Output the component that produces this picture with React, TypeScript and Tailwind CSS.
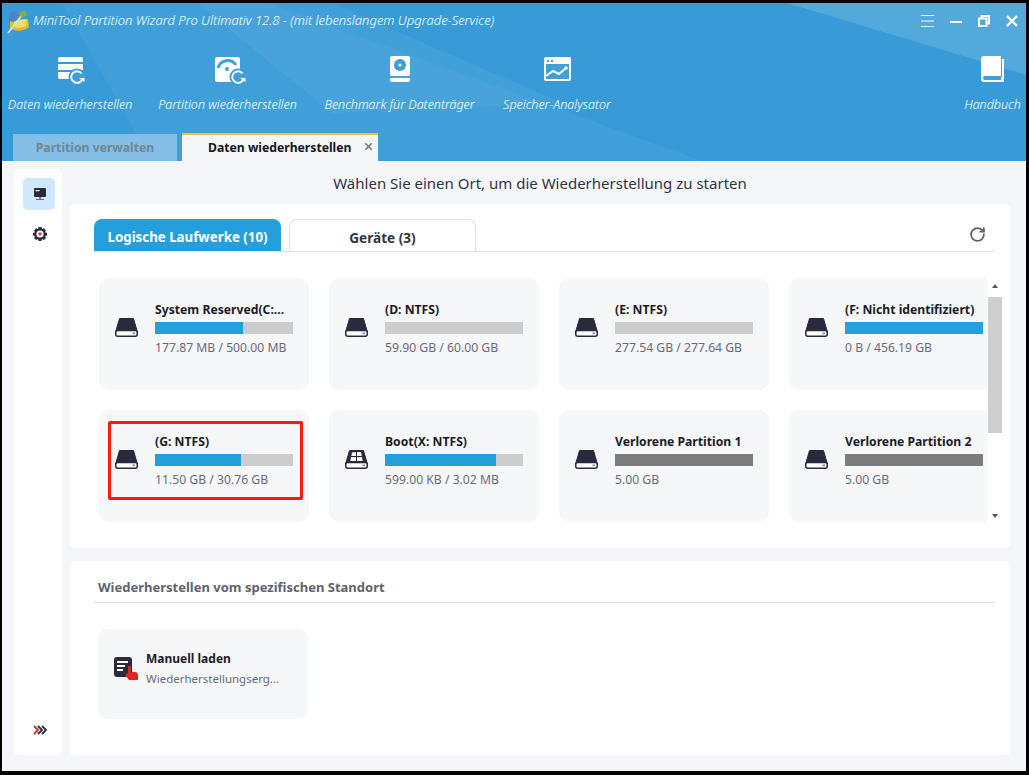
import { RotateCw, X } from 'lucide-react';

interface Drive {
  name: string;
  size: string;
  used: number;
  lost?: boolean;
  boot?: boolean;
  marked?: boolean;
}

const drives: Drive[] = [
  { name: 'System Reserved(C:...', size: '177.87 MB / 500.00 MB', used: 64 },
  { name: '(D: NTFS)', size: '59.90 GB / 60.00 GB', used: 0 },
  { name: '(E: NTFS)', size: '277.54 GB / 277.64 GB', used: 0 },
  { name: '(F: Nicht identifiziert)', size: '0 B / 456.19 GB', used: 100 },
  { name: '(G: NTFS)', size: '11.50 GB / 30.76 GB', used: 62.5, marked: true },
  { name: 'Boot(X: NTFS)', size: '599.00 KB / 3.02 MB', used: 80.5, boot: true },
  { name: 'Verlorene Partition 1', size: '5.00 GB', used: 100, lost: true },
  { name: 'Verlorene Partition 2', size: '5.00 GB', used: 100, lost: true },
];

const RefreshMark = ({ cx, cy }: { cx: number; cy: number }) => (
  <g>
    <circle cx={cx} cy={cy} r="8.5" fill="#3f9fd8" />
    <path
      d={`M${cx + 4.6} ${cy - 3.6}A5.8 5.8 0 1 0 ${cx + 5.8} ${cy + 1}`}
      fill="none"
      stroke="white"
      strokeWidth="1.8"
    />
    <path d={`M${cx + 2} ${cy + 1}H${cx + 7.5}V${cy + 5}Z`} fill="white" />
  </g>
);

const DataIcon = () => (
  <svg width="27" height="27" viewBox="0 0 27 27">
    <path d="M2 0H23a2 2 0 0 1 2 2V5H0V2a2 2 0 0 1 2-2Z" fill="white" />
    <rect x="0" y="7" width="25" height="6" fill="white" />
    <path d="M0 15H25V22H2a2 2 0 0 1-2-2Z" fill="white" />
    <RefreshMark cx={19} cy={20} />
  </svg>
);

const PartitionIcon = () => (
  <svg width="31" height="27" viewBox="0 0 31 27">
    <rect x="0" y="0" width="25" height="25" rx="2.5" fill="white" />
    <path d="M3 11A10 10 0 0 1 21 8" fill="none" stroke="#3f9fd8" strokeWidth="3" />
    <circle cx="12" cy="12" r="2" fill="#3f9fd8" />
    <RefreshMark cx={23} cy={20} />
  </svg>
);

const BenchmarkIcon = () => (
  <svg width="20" height="26" viewBox="0 0 20 26">
    <rect x="0" y="0" width="20" height="20" rx="2" fill="white" />
    <circle cx="10" cy="9" r="6" fill="#3f9fd8" />
    <circle cx="10" cy="9" r="1.6" fill="white" />
    <path d="M4 9H8V13L5 13Z" fill="#3f9fd8" />
    <path d="M0 22H20V24a2 2 0 0 1-2 2H2a2 2 0 0 1-2-2Z" fill="white" />
  </svg>
);

const AnalyzerIcon = () => (
  <svg width="27" height="24" viewBox="0 0 27 24">
    <path d="M2 0H25a2 2 0 0 1 2 2V22a2 2 0 0 1-2 2H2a2 2 0 0 1-2-2V2a2 2 0 0 1 2-2Z" fill="white" />
    <rect x="2" y="7" width="23" height="15" fill="#3f9fd8" />
    <rect x="3" y="3" width="2" height="2" fill="#3f9fd8" />
    <rect x="7" y="3" width="2" height="2" fill="#3f9fd8" />
    <path d="M2 19L9 14L15 17L22 11" fill="none" stroke="white" strokeWidth="2" />
    <circle cx="22" cy="11" r="1.8" fill="white" />
  </svg>
);

const BookIcon = () => (
  <svg width="23" height="26" viewBox="0 0 23 26">
    <path d="M3 0H20V20H4a1.5 1.5 0 0 0 0 4H20V21H23V26H3a3 3 0 0 1-3-3V3a3 3 0 0 1 3-3Z" fill="white" />
    <rect x="21" y="3" width="2" height="19" fill="white" />
    <rect x="3" y="20" width="17" height="2" fill="#3f9fd8" />
    <rect x="3" y="23" width="17" height="1" fill="#3f9fd8" />
  </svg>
);

const DiskIcon = ({ boot }: { boot?: boolean }) => (
  <svg width="23" height="19" viewBox="0 0 23 19" className="shrink-0">
    <path d="M4.5 0.5H18.5L22.4 14H0.6Z" fill="#2a2a3e" stroke="#2a2a3e" />
    <rect x="0.75" y="12.5" width="21.5" height="5.75" rx="2" fill="white" stroke="#2a2a3e" strokeWidth="1.5" />
    <rect x="17.5" y="14.5" width="2.5" height="1.7" fill="#8a8a96" />
    {boot && (
      <g fill="white">
        <path d="M7 2.5L11 2V6H6.3Z" />
        <path d="M12 2H16L16.7 6H12Z" />
        <path d="M6 7H11V11H5.3Z" />
        <path d="M12 7H17L17.7 11H12Z" />
      </g>
    )}
  </svg>
);

const DriveCard = ({ drive }: { drive: Drive }) => (
  <div className="relative flex h-[112px] w-[210px] shrink-0 items-start rounded-[10px] bg-[#f6f7f9] pl-[16px] pt-[24px]">
    <div className="mt-[16px] w-[40px]">
      <DiskIcon boot={drive.boot} />
    </div>
    <div className="w-[138px]">
      <div className="h-[16px] whitespace-nowrap text-[12.2px] font-bold leading-[16px] text-[#1c1c28]">{drive.name}</div>
      <div className={`mt-[4px] h-[12px] w-full ${drive.lost ? 'bg-[#7c7c7c]' : 'bg-[#cccccc]'}`}>
        <div
          className={`h-full ${drive.lost ? 'bg-[#7c7c7c]' : 'bg-[#259fdb]'}`}
          style={{ width: `${drive.used}%` }}
        />
      </div>
      <div className="mt-[6px] whitespace-nowrap text-[12.2px] leading-[16px] text-[#6a6a78]">{drive.size}</div>
    </div>
    {drive.marked && (
      <div className="absolute left-[9px] top-[11px] h-[79px] w-[195px] rounded-[2px] border-[3px] border-[#fb1a10]" />
    )}
  </div>
);

const App = () => {
  return (
    <div className="flex h-[775px] w-[1029px] flex-col overflow-hidden bg-black pb-[4px] pl-[2px] pr-[3px] pt-[3px] font-['Noto_Sans',sans-serif]">
      <header className="relative flex h-[158px] shrink-0 flex-col overflow-hidden bg-[#389bd7]">
        <svg className="absolute inset-0" width="1024" height="158" viewBox="0 0 1024 158">
          <path d="M60 0H265L700 158H150Z" fill="white" opacity="0.045" />
          <path d="M195 0H330L560 100L330 110Z" fill="white" opacity="0.05" />
          <path d="M785 0H1024V72Z" fill="white" opacity="0.14" />
        </svg>

        <div className="relative flex h-[36px] items-center pl-[5px] pr-[8px]">
          <svg width="23" height="25" viewBox="0 0 23 25" className="shrink-0">
            <circle cx="8" cy="9" r="7" fill="#4d86c7" />
            <path d="M3 12C7 15 14 9 21 10L22 18C16 23 6 23 3 18Z" fill="#e8b92f" />
            <path d="M7 13C10 11 16 9 20 11L19 17C14 19 10 19 8 18Z" fill="#f6de6a" />
            <path d="M1 24L15 6" stroke="#d8dfe6" strokeWidth="2" />
            <path d="M12 4L18 1L20 6L15 9Z" fill="#7fae4a" />
          </svg>
          <span className="ml-[3px] whitespace-nowrap text-[13px] font-light italic text-white">
            MiniTool Partition Wizard Pro Ultimativ 12.8 - (mit lebenslangem Upgrade-Service)
          </span>
          <div className="ml-auto flex items-center gap-[16px]">
            <svg width="13" height="12" viewBox="0 0 13 12" stroke="white" strokeWidth="1">
              <path d="M0 0.5H13M0 6H13M0 11.5H13" />
            </svg>
            <svg width="12" height="12" viewBox="0 0 12 12" fill="white">
              <rect x="0" y="6" width="12" height="2" />
            </svg>
            <svg width="12" height="12" viewBox="0 0 12 12" fill="none" stroke="white" strokeWidth="2">
              <path d="M3.5 3V1H11V8.5H9" />
              <rect x="1" y="3.5" width="7.5" height="7.5" />
            </svg>
            <svg width="12" height="12" viewBox="0 0 12 12" stroke="white" strokeWidth="2.4">
              <path d="M1 1L11 11M11 1L1 11" />
            </svg>
          </div>
        </div>

        <nav className="relative flex h-[95px] items-start gap-[26px] pl-[6px] pr-[5px] text-[12.5px] font-light italic text-white">
          <div className="flex w-[124px] flex-col items-center">
            <div className="ml-[3px] box-content flex h-[27px] items-start pt-[18px]"><DataIcon /></div>
            <span className="mt-[12px] whitespace-nowrap leading-[18px]">Daten wiederherstellen</span>
          </div>
          <div className="flex w-[139px] flex-col items-center">
            <div className="ml-[5px] box-content flex h-[27px] items-start pt-[18px]"><PartitionIcon /></div>
            <span className="mt-[12px] whitespace-nowrap leading-[18px]">Partition wiederherstellen</span>
          </div>
          <div className="flex w-[153px] flex-col items-center">
            <div className="box-content flex h-[27px] items-start pt-[17px]"><BenchmarkIcon /></div>
            <span className="mt-[13px] whitespace-nowrap leading-[18px]">Benchmark für Datenträger</span>
          </div>
          <div className="flex w-[110px] flex-col items-center">
            <div className="box-content flex h-[27px] items-start pt-[18px]"><AnalyzerIcon /></div>
            <span className="mt-[12px] whitespace-nowrap leading-[18px]">Speicher-Analysator</span>
          </div>
          <div className="ml-auto flex w-[57px] flex-col items-center">
            <div className="box-content flex h-[27px] items-start pt-[17px]"><BookIcon /></div>
            <span className="mt-[13px] whitespace-nowrap leading-[18px]">Handbuch</span>
          </div>
        </nav>

        <div className="relative flex h-[27px] items-end gap-[5px] pl-[11px]">
          <div className="flex h-[27px] w-[164px] items-center justify-center bg-[#84bee4] pt-[2px] text-[12.2px] font-bold text-[#6f8796]">
            Partition verwalten
          </div>
          <div className="relative flex h-[28px] w-[196px] items-center border-t-2 border-[#f6bb4a] bg-[#f5f6f8] pl-[26px] pt-[1px] text-[12.2px] font-bold text-[#15151f]">
            Daten wiederherstellen
            <X size={11} strokeWidth={3.5} className="absolute right-[4px] top-[6px] text-[#77777f]" />
          </div>
        </div>
      </header>

      <div className="flex min-h-0 flex-1 gap-[8px] bg-[#f5f6fa] pl-[12px]">
        <aside className="mb-[16px] mt-[8px] flex w-[48px] flex-col items-center rounded-[5px] bg-white pl-[2px] pt-[9px]">
          <div className="flex h-[32px] w-[32px] items-center justify-center rounded-[5px] bg-[#cfe8fd] pl-[2px]">
            <svg width="14" height="14" viewBox="0 0 14 14">
              <rect x="1" y="1" width="12" height="9" rx="1" fill="#2a2a3e" />
              <rect x="2.5" y="3" width="4" height="1.2" fill="white" />
              <rect x="6" y="10" width="2" height="2" fill="#ef4444" />
              <rect x="3" y="12" width="8" height="1" fill="#6a6a78" />
            </svg>
          </div>
          <svg width="14" height="14" viewBox="0 0 14 14" className="ml-[2px] mt-[17px]">
            <path d="M5.5 0H8.5L9 2L11 1.2L13 3.5L12 5.2L14 6V8.5L12 9L13 11L11 13L9 12L8.5 14H5.5L5 12L3 13L1 11L2 9L0 8.5V6L2 5.2L1 3.5L3 1.2L5 2Z" fill="#2a2a3e" />
            <circle cx="7" cy="7" r="3.6" fill="white" />
            <circle cx="7" cy="7" r="1.8" fill="#ef4444" />
          </svg>
          <svg width="14" height="10" viewBox="0 0 14 10" className="mb-[20px] ml-[2px] mt-auto" fill="none" strokeWidth="1.8">
            <path d="M1 1L5 5L1 9" stroke="#e02424" />
            <path d="M5 1L9 5L5 9" stroke="#2a2a3e" />
            <path d="M9 1L13 5L9 9" stroke="#2a2a3e" />
          </svg>
        </aside>

        <main className="flex w-[940px] flex-col">
          <h1 className="flex h-[43px] shrink-0 items-center justify-center pt-[1px] text-[15px] font-normal text-[#33333d]">
            Wählen Sie einen Ort, um die Wiederherstellung zu starten
          </h1>

          <section className="h-[344px] shrink-0 rounded-[5px] bg-white pl-[24px] pr-[15px] pt-[15px]">
            <div className="flex h-[33px] items-end border-b border-[#e2e2e2]">
              <div className="flex h-[32px] w-[187px] items-center justify-center rounded-t-[8px] bg-[#259fdb] pt-[5px] text-[13.3px] font-bold text-white">
                Logische Laufwerke (10)
              </div>
              <div className="ml-[8px] flex h-[32px] w-[187px] items-center justify-center rounded-t-[8px] border border-b-0 border-[#e2e2e2] pt-[5px] text-[13.6px] font-bold text-[#33333d]">
                Geräte (3)
              </div>
              <RotateCw size={17} strokeWidth={2.5} className="mb-[8px] ml-auto mr-[9px] text-[#5f5f68]" />
            </div>

            <div className="ml-[5px] mt-[26px] flex h-[244px] items-start">
              <div className="h-[244px] w-[888px] shrink-0 overflow-hidden">
                <div className="grid w-[900px] grid-cols-[repeat(4,210px)] gap-x-[20px] gap-y-[20px]">
                  {drives.map(drive => (
                    <DriveCard key={drive.name} drive={drive} />
                  ))}
                </div>
              </div>
              <div className="ml-[1px] flex h-[244px] w-[14px] shrink-0 flex-col items-center pt-[6px]">
                <div className="h-0 w-0 border-x-[3.5px] border-b-[4px] border-x-transparent border-b-[#55555c]" />
                <div className="mt-[9px] h-[136px] w-[14px] bg-[#cfcfcf]" />
                <div className="mb-[4px] mt-auto h-0 w-0 border-x-[3.5px] border-t-[4px] border-x-transparent border-t-[#55555c]" />
              </div>
            </div>
          </section>

          <section className="mt-[13px] h-[194px] shrink-0 rounded-[5px] bg-white pl-[24px] pr-[15px]">
            <div className="flex h-[42px] items-end border-b border-[#e2e2e2] pb-[5px] pl-[4px] text-[13px] font-bold text-[#62626c]">
              Wiederherstellen vom spezifischen Standort
            </div>
            <div className="ml-[4px] mt-[26px] flex h-[90px] w-[210px] items-start rounded-[10px] bg-[#f6f7f9] pl-[16px] pt-[22px]">
              <svg width="24" height="24" viewBox="0 0 24 24" className="mt-[6px] shrink-0">
                <rect x="0" y="0" width="18" height="20" rx="3" fill="#2a2a3e" />
                <rect x="3" y="4" width="11" height="2" fill="white" />
                <rect x="3" y="8" width="8" height="2" fill="white" />
                <rect x="3" y="12" width="6" height="2" fill="white" />
                <path d="M14 9H17V15H21C23.5 15 24 17 24 19V23H15L11 18L14 16Z" fill="#e02424" />
              </svg>
              <div className="ml-[8px]">
                <div className="text-[12px] font-bold leading-[16px] text-[#1c1c28]">Manuell laden</div>
                <div className="mt-[4px] whitespace-nowrap text-[11.5px] leading-[16px] text-[#6a6a78]">Wiederherstellungserg...</div>
              </div>
            </div>
          </section>
        </main>
      </div>
    </div>
  );
};

export default App;
